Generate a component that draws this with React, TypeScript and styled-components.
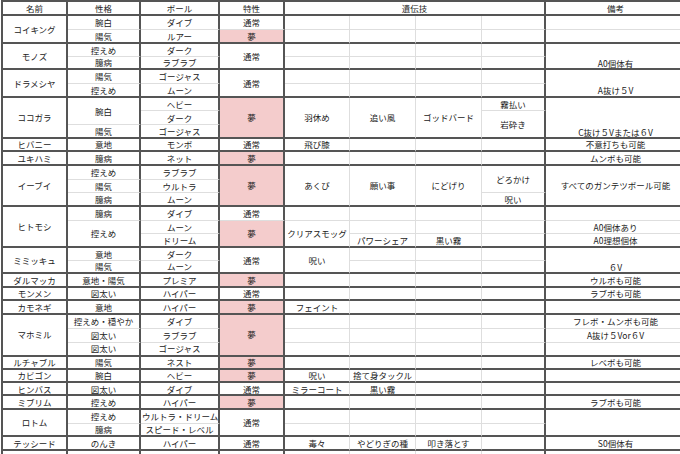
import React from 'react';
import styled, { createGlobalStyle } from 'styled-components';

const GlobalStyle = createGlobalStyle`
  html, body {
    margin: 0;
    padding: 0;
    background: #fff;
  }
  body {
    width: 680px;
    height: 454px;
    overflow: hidden;
    font-family: "Noto Sans CJK JP", "Noto Sans", sans-serif;
  }
`;

type Opt = { s?: number; p?: boolean; v?: 'bottom' | 'top' };
type CellDef = [number, string?, Opt?];
type Group = { h: number[]; rows: CellDef[][] };

const DARK = '2px solid #555';
const LIGHT = '1px solid #dedede';
const darkRight = [0, 1, 2, 3, 7];
const widths = [67, 73, 79, 65, 65, 66, 66, 64, 140];

const E = (cs: number[]): CellDef[] => cs.map((c) => [c] as CellDef);
const rep = (n: number, h: number) => Array.from({ length: n }, () => h);
const P = { p: true };

const groups: Group[] = [
  {
    h: [14, 13.7],
    rows: [
      [[0, 'コイキング', { s: 2 }], [1, '腕白'], [2, 'ダイブ'], [3, '通常'], ...E([4, 5, 6, 7, 8])],
      [[1, '陽気'], [2, 'ルアー'], [3, '夢', P], ...E([4, 5, 6, 7, 8])],
    ],
  },
  {
    h: [13.3, 13.3],
    rows: [
      [[0, 'モノズ', { s: 2 }], [1, '控えめ'], [2, 'ダーク'], [3, '通常', { s: 2 }], ...E([4, 5, 6, 7]), [8, 'A0個体有', { s: 2, v: 'bottom' }]],
      [[1, '臆病'], [2, 'ラブラブ'], ...E([4, 5, 6, 7])],
    ],
  },
  {
    h: [13.7, 13.7],
    rows: [
      [[0, 'ドラメシヤ', { s: 2 }], [1, '陽気'], [2, 'ゴージャス'], [3, '通常', { s: 2 }], ...E([4, 5, 6, 7]), [8, 'A抜け５V', { s: 2, v: 'bottom' }]],
      [[1, '控えめ'], [2, 'ムーン'], ...E([4, 5, 6, 7])],
    ],
  },
  {
    h: [13.8, 13.9, 13.9],
    rows: [
      [
        [0, 'ココガラ', { s: 3 }], [1, '腕白', { s: 2 }], [2, 'ヘビー'], [3, '夢', { s: 3, p: true }],
        [4, '羽休め', { s: 3 }], [5, '追い風', { s: 3 }], [6, 'ゴッドバード', { s: 3 }], [7, '霧払い'],
        [8, 'C抜け５Vまたは６V', { s: 3, v: 'bottom' }],
      ],
      [[2, 'ダーク'], [7, '岩砕き', { s: 2 }]],
      [[1, '陽気'], [2, 'ゴージャス']],
    ],
  },
  {
    h: [12.4],
    rows: [[[0, 'ヒバニー'], [1, '意地'], [2, 'モンボ'], [3, '通常'], [4, '飛び膝'], ...E([5, 6, 7]), [8, '不意打ちも可能']]],
  },
  {
    h: [14.3],
    rows: [[[0, 'ユキハミ'], [1, '臆病'], [2, 'ネット'], [3, '夢', P], ...E([4, 5, 6, 7]), [8, 'ムンボも可能']]],
  },
  {
    h: rep(3, 13.67),
    rows: [
      [
        [0, 'イーブイ', { s: 3 }], [1, '控えめ'], [2, 'ラブラブ'], [3, '夢', { s: 3, p: true }],
        [4, 'あくび', { s: 3 }], [5, '願い事', { s: 3 }], [6, 'にどげり', { s: 3 }], [7, 'どろかけ', { s: 2 }],
        [8, 'すべてのガンテツボール可能', { s: 3 }],
      ],
      [[1, '陽気'], [2, 'ウルトラ']],
      [[1, '臆病'], [2, 'ムーン'], [7, '呪い']],
    ],
  },
  {
    h: rep(3, 13.67),
    rows: [
      [[0, 'ヒトモシ', { s: 3 }], [1, '臆病'], [2, 'ダイブ'], [3, '通常'], ...E([4, 5, 6, 7, 8])],
      [[1, '控えめ', { s: 2 }], [2, 'ムーン'], [3, '夢', { s: 2, p: true }], [4, 'クリアスモッグ', { s: 2 }], ...E([5, 6, 7]), [8, 'A0個体あり']],
      [[2, 'ドリーム'], [5, 'パワーシェア'], [6, '黒い霧'], [7], [8, 'A0理想個体']],
    ],
  },
  {
    h: [13.15, 13.15],
    rows: [
      [[0, 'ミミッキュ', { s: 2 }], [1, '意地'], [2, 'ダーク'], [3, '通常', { s: 2 }], [4, '呪い', { s: 2 }], ...E([5, 6, 7]), [8, '６V', { s: 2, v: 'bottom' }]],
      [[1, '陽気'], [2, 'ムーン'], ...E([5, 6, 7])],
    ],
  },
  {
    h: [13.4],
    rows: [[[0, 'ダルマッカ'], [1, '意地・陽気'], [2, 'プレミア'], [3, '夢', P], ...E([4, 5, 6, 7]), [8, 'ウルボも可能']]],
  },
  {
    h: [13.3],
    rows: [[[0, 'モンメン'], [1, '図太い'], [2, 'ハイパー'], [3, '通常'], ...E([4, 5, 6, 7]), [8, 'ラブボも可能']]],
  },
  {
    h: [14],
    rows: [[[0, 'カモネギ'], [1, '意地'], [2, 'ハイパー'], [3, '夢', P], [4, 'フェイント'], ...E([5, 6, 7, 8])]],
  },
  {
    h: rep(3, 13.9),
    rows: [
      [[0, 'マホミル', { s: 3 }], [1, '控えめ・穏やか'], [2, 'ダイブ'], [3, '夢', { s: 3, p: true }], ...E([4, 5, 6, 7]), [8, 'フレボ・ムンボも可能']],
      [[1, '図太い'], [2, 'ラブラブ'], ...E([4, 5, 6, 7]), [8, 'A抜け５Vor６V']],
      [[1, '図太い'], [2, 'ゴージャス'], ...E([4, 5, 6, 7, 8])],
    ],
  },
  {
    h: [13.3],
    rows: [[[0, 'ルチャブル'], [1, '陽気'], [2, 'ネスト'], [3, '夢', P], ...E([4, 5, 6, 7]), [8, 'レベボも可能']]],
  },
  {
    h: [13.3],
    rows: [[[0, 'カビゴン'], [1, '腕白'], [2, 'ヘビー'], [3, '夢', P], [4, '呪い'], [5, '捨て身タックル'], ...E([6, 7, 8])]],
  },
  {
    h: [13.4],
    rows: [[[0, 'ヒンバス'], [1, '図太い'], [2, 'ダイブ'], [3, '通常'], [4, 'ミラーコート'], [5, '黒い霧'], ...E([6, 7, 8])]],
  },
  {
    h: [13.3],
    rows: [[[0, 'ミブリム'], [1, '控えめ'], [2, 'ハイパー'], [3, '夢', P], ...E([4, 5, 6, 7]), [8, 'ラブボも可能']]],
  },
  {
    h: [13.85, 13.85],
    rows: [
      [[0, 'ロトム', { s: 2 }], [1, '控えめ'], [2, 'ウルトラ・ドリーム'], [3, '通常', { s: 2 }], ...E([4, 5, 6, 7]), [8, '', { s: 2 }]],
      [[1, '臆病'], [2, 'スピード・レベル'], ...E([4, 5, 6, 7])],
    ],
  },
  {
    h: [13.3],
    rows: [[[0, 'テッシード'], [1, 'のんき'], [2, 'ハイパー'], [3, '通常'], [4, '毒々'], [5, 'やどりぎの種'], [6, '叩き落とす'], [7], [8, 'S0個体有']]],
  },
  {
    // next group, only its top edge is inside the frame
    h: [14],
    rows: [E([0, 1, 2, 3, 4, 5, 6, 7, 8])],
  },
];

const Sheet = styled.table`
  border-collapse: separate;
  border-spacing: 0;
  table-layout: fixed;
  width: ${widths.reduce((a, b) => a + b, 0)}px;
  margin-left: 1px;
  font-size: 8.5px;
  color: #222;
`;

const Col = styled.col<{ $w: number }>`
  width: ${({ $w }) => $w}px;
`;

const Row = styled.tr<{ $h: number }>`
  height: ${({ $h }) => $h}px;
`;

const Cell = styled.td<{ $c: number; $end?: boolean; $pink?: boolean; $v?: string; $top?: boolean }>`
  box-sizing: border-box;
  padding: 0 1px;
  padding-bottom: ${({ $v }) => ($v === 'bottom' ? '1px' : '0')};
  text-align: center;
  vertical-align: ${({ $v }) => $v ?? 'middle'};
  white-space: nowrap;
  line-height: 1;
  font-weight: 400;
  background: ${({ $pink }) => ($pink ? '#f4cccc' : '#fff')};
  border-top: ${({ $top }) => ($top ? DARK : 'none')};
  border-left: ${({ $c }) => ($c === 0 ? DARK : 'none')};
  border-right: ${({ $c }) => (darkRight.includes($c) ? DARK : LIGHT)};
  border-bottom: ${({ $end }) => ($end ? DARK : LIGHT)};
`;

const headers: [number, string, number][] = [
  [0, '名前', 1],
  [1, '性格', 1],
  [2, 'ボール', 1],
  [3, '特性', 1],
  [7, '遺伝技', 4],
  [8, '備考', 1],
];

export default function App() {
  return (
    <>
      <GlobalStyle />
      <Sheet>
        <colgroup>
          {widths.map((w, i) => (
            <Col key={i} $w={w} />
          ))}
        </colgroup>
        <thead>
          <Row $h={16}>
            {headers.map(([c, t, span]) => (
              <Cell as="th" key={c} $c={c} colSpan={span} $top $end>
                {t}
              </Cell>
            ))}
          </Row>
        </thead>
        <tbody>
          {groups.map((g, gi) =>
            g.rows.map((row, ri) => (
              <Row key={`${gi}-${ri}`} $h={g.h[ri]}>
                {row.map(([c, t, o]) => {
                  const span = o?.s ?? 1;
                  return (
                    <Cell
                      key={c}
                      $c={c}
                      rowSpan={span}
                      $end={ri + span === g.rows.length}
                      $pink={o?.p}
                      $v={o?.v}
                    >
                      {t}
                    </Cell>
                  );
                })}
              </Row>
            )),
          )}
        </tbody>
      </Sheet>
    </>
  );
}
